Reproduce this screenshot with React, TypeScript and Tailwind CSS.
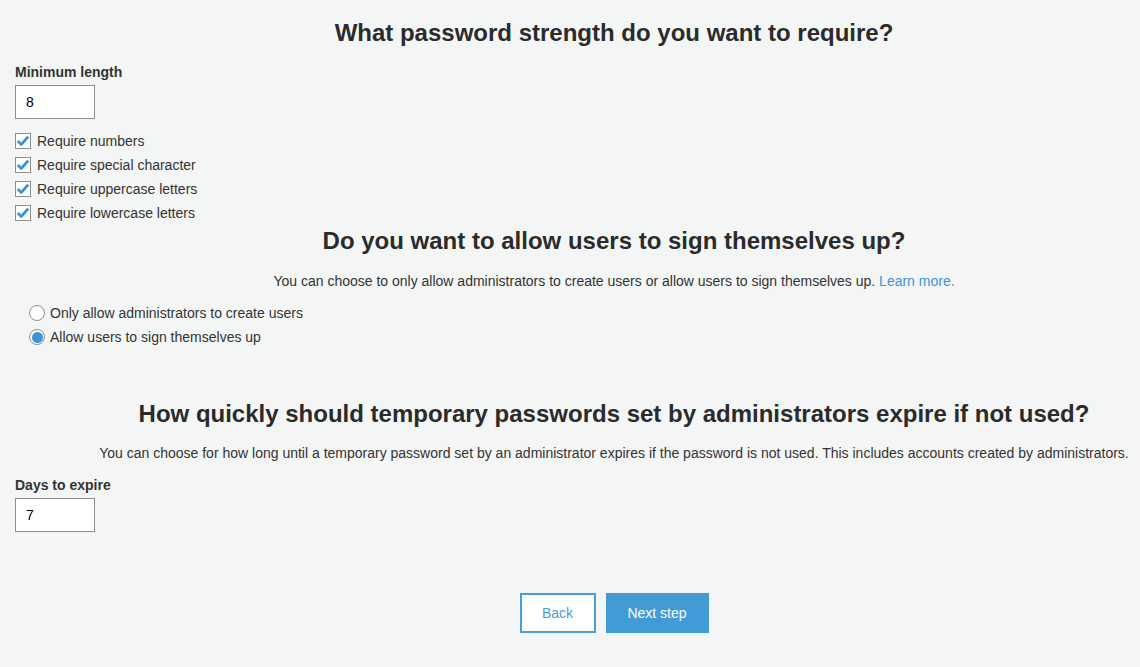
import React, { useState } from "react";

const checks = [
  "Require numbers",
  "Require special character",
  "Require uppercase letters",
  "Require lowercase letters",
];

function CheckBox({ label }: { label: string }) {
  return (
    <label className="flex h-6 items-center gap-[6px]">
      <span className="flex h-4 w-4 items-center justify-center border border-[#8e8e8e] bg-white">
        <svg viewBox="0 0 16 16" className="h-[14px] w-[14px]">
          <path d="M2 8 L6 12 L14 3" fill="none" stroke="#3b94d9" strokeWidth="3.2" strokeLinejoin="round" />
        </svg>
      </span>
      <span>{label}</span>
    </label>
  );
}

function Radio({ label, checked, onClick }: { label: string; checked: boolean; onClick: () => void }) {
  return (
    <label className="flex h-6 cursor-pointer items-center gap-[5px]" onClick={onClick}>
      <span className="flex h-4 w-4 items-center justify-center rounded-full border border-[#8e8e8e] bg-white">
        {checked && <span className="h-[11px] w-[11px] rounded-full bg-[#3b94d9]"></span>}
      </span>
      <span>{label}</span>
    </label>
  );
}

export default function App() {
  const [signup, setSignup] = useState("self");

  return (
    <div className="min-h-screen overflow-x-hidden bg-[#f4f6f5] font-['Liberation_Sans',Arial,sans-serif] text-sm text-[#333]">
      <div className="ml-[15px] w-[1198px] pt-[19px] pb-8">
        {/* password strength */}
        <h2 className="text-center text-2xl font-bold leading-7 text-[#2b2b2b]">
          What password strength do you want to require?
        </h2>
        <div className="mt-[15px] font-bold leading-5">Minimum length</div>
        <input
          defaultValue="8"
          className="mt-[3px] h-[34px] w-20 border border-[#8e8e8e] bg-white px-[10px] text-black outline-none"
        />
        <div className="mt-[10px]">
          {checks.map((c) => (
            <CheckBox key={c} label={c} />
          ))}
        </div>

        {/* self signup */}
        <h2 className="mt-[2px] text-center text-2xl font-bold leading-7 text-[#2b2b2b]">
          Do you want to allow users to sign themselves up?
        </h2>
        <p className="mt-4 text-center leading-5">
          You can choose to only allow administrators to create users or allow users to sign themselves up.{" "}
          <a href="#" className="text-[#3b94d9]">Learn more.</a>
        </p>
        <div className="mt-[10px] pl-[14px]">
          <Radio
            label="Only allow administrators to create users"
            checked={signup === "admin"}
            onClick={() => setSignup("admin")}
          />
          <Radio
            label="Allow users to sign themselves up"
            checked={signup === "self"}
            onClick={() => setSignup("self")}
          />
        </div>

        {/* temp password expiry */}
        <h2 className="mt-[51px] text-center text-2xl font-bold leading-7 text-[#2b2b2b]">
          How quickly should temporary passwords set by administrators expire if not used?
        </h2>
        <p className="mt-[15px] text-center leading-5">
          You can choose for how long until a temporary password set by an administrator expires if the password is not used. This includes accounts created by administrators.
        </p>
        <div className="mt-3 font-bold leading-5">Days to expire</div>
        <input
          defaultValue="7"
          className="mt-[3px] h-[34px] w-20 border border-[#8e8e8e] bg-white px-[10px] text-black outline-none"
        />

        <div className="mt-[61px] flex justify-center gap-[10px]">
          <button className="h-10 w-[76px] border-2 border-[#4a9dd8] bg-white text-[#4a9dd8]">Back</button>
          <button className="h-10 w-[103px] bg-[#439bd6] text-white">Next step</button>
        </div>
      </div>
    </div>
  );
}
